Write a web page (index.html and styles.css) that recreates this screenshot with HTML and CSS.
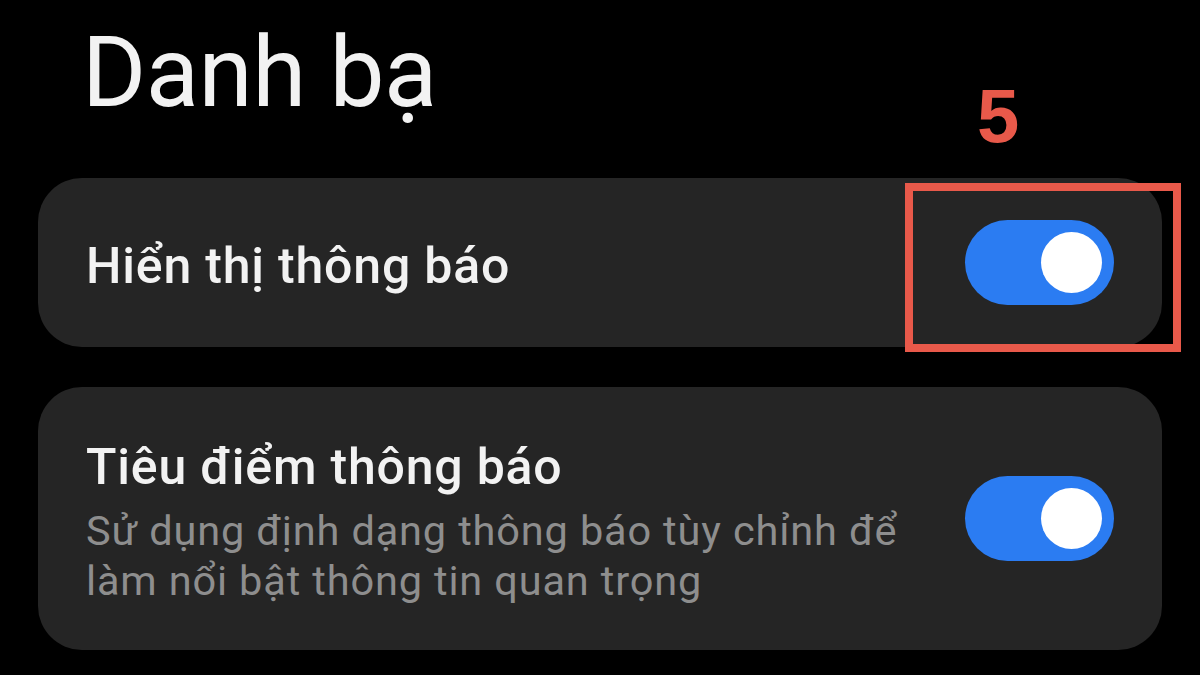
FILE: index.html
```html
<!DOCTYPE html>
<html lang="vi">
<head>
<meta charset="utf-8">
<title>Danh bạ</title>
<link rel="stylesheet" href="styles.css">
</head>
<body>
<main class="screen">
  <h1 class="title">Danh bạ</h1>
  <section class="card card-single">
    <div class="text">
      <div class="label">Hiển thị thông báo</div>
    </div>
    <div class="switch"><span class="knob"></span></div>
  </section>
  <section class="card card-double">
    <div class="text">
      <div class="label">Tiêu điểm thông báo</div>
      <div class="desc">Sử dụng định dạng thông báo tùy chỉnh để làm nổi bật thông tin quan trọng</div>
    </div>
    <div class="switch"><span class="knob"></span></div>
  </section>
  <div class="mark-box"></div>
  <div class="mark-num">5</div>
</main>
</body>
</html>
```
FILE: styles.css
```css
html, body {
  margin: 0;
  padding: 0;
  background: #000;
}
.screen {
  position: relative;
  width: 1200px;
  height: 675px;
  overflow: hidden;
  padding: 0 38px;
  box-sizing: border-box;
  font-family: Roboto, "Noto Sans", sans-serif;
}
.title {
  margin: 0;
  padding: 24px 0 0 44px;
  height: 178px;
  box-sizing: border-box;
  font-size: 98px;
  line-height: 98px;
  font-weight: 400;
  color: #f2f2f2;
  letter-spacing: -0.5px;
}
.card {
  background: #252525;
  border-radius: 44px;
  display: flex;
  align-items: center;
  justify-content: space-between;
  padding: 0 48px;
}
.card-single {
  height: 169px;
}
.card-double {
  height: 263px;
  margin-top: 40px;
}
.text {
  flex: 1;
  padding-top: 6px;
}
.label {
  font-size: 50px;
  font-weight: 500;
  color: #f2f2f2;
  line-height: 60px;
  letter-spacing: 0.8px;
}
.desc {
  font-size: 41.5px;
  line-height: 50px;
  color: #8e8e8e;
  max-width: 840px;
  margin-top: 9px;
  letter-spacing: 0.85px;
}
.switch {
  width: 149px;
  height: 85px;
  border-radius: 43px;
  background: #2b7cf2;
  display: flex;
  align-items: center;
  justify-content: flex-end;
  padding-right: 12px;
  box-sizing: border-box;
  flex: none;
}
.knob {
  width: 61px;
  height: 61px;
  border-radius: 50%;
  background: #fff;
}
.mark-box {
  position: absolute;
  left: 905px;
  top: 183px;
  width: 276px;
  height: 169px;
  border: 8px solid #e8594a;
  box-sizing: border-box;
}
.mark-num {
  position: absolute;
  left: 977px;
  top: 74px;
  font-family: "Liberation Sans", Arial, sans-serif;
  font-weight: 700;
  font-size: 76px;
  line-height: 84px;
  color: #e8594a;
}
```
